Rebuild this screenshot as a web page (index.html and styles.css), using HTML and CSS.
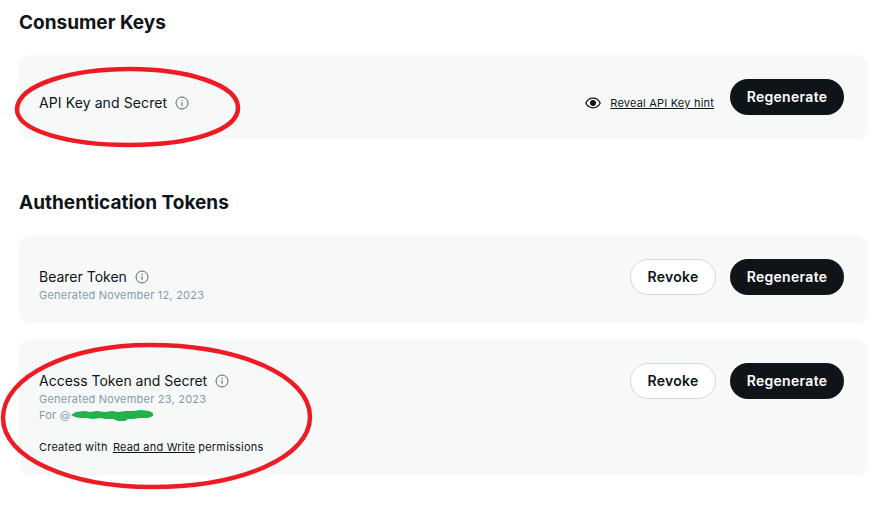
FILE: index.html
```html
<!doctype html>
<html>
<head>
<meta charset="utf-8">
<title>Keys and tokens</title>
<link rel="stylesheet" href="styles.css">
</head>
<body>
<section class="wrap">
	<h2 class="title">Consumer Keys</h2>
	<div class="card card-key">
		<div class="info">
			<div class="name">API Key and Secret
				<svg class="hint" viewBox="0 0 14 14"><circle cx="7" cy="7" r="6" /><path d="M7 6.2v4M7 3.8v1.1" /></svg>
			</div>
		</div>
		<div class="actions">
			<svg class="eye" viewBox="0 0 16 12"><path d="M.8 6C2.4 2.8 5 1.2 8 1.2s5.6 1.6 7.2 4.8c-1.6 3.200-4.200 4.800-7.200 4.800S2.400 9.200.8 6z" fill="none" stroke="#0f1419" stroke-width="1.300" /><circle cx="8" cy="6" r="3" fill="#0f1419" /></svg>
			<a href="#" class="reveal">Reveal API Key hint</a>
			<a href="#" class="btn btn-dark">Regenerate</a>
		</div>
	</div>

	<h2 class="title title-second">Authentication Tokens</h2>
	<div class="card card-token">
		<div class="info">
			<div class="name">Bearer Token
				<svg class="hint" viewBox="0 0 14 14"><circle cx="7" cy="7" r="6" /><path d="M7 6.2v4M7 3.8v1.1" /></svg>
			</div>
			<div class="sub">Generated November 12, 2023</div>
		</div>
		<div class="actions">
			<a href="#" class="btn btn-light">Revoke</a>
			<a href="#" class="btn btn-dark">Regenerate</a>
		</div>
	</div>
	<div class="card card-token">
		<div class="info">
			<div class="name">Access Token and Secret
				<svg class="hint" viewBox="0 0 14 14"><circle cx="7" cy="7" r="6" /><path d="M7 6.2v4M7 3.8v1.1" /></svg>
			</div>
			<div class="sub">Generated November 23, 2023</div>
			<div class="sub">For @<svg class="blot" viewBox="0 0 82 11"><path d="M0 5l5-3 8-1 6 1 7-1 8 1 7-1 6 1 8-1 7 0 8-1 8 1 4 2 0 3-5 2-8 0-7 1-5 0-3 2-7 0-5-2-7 0-6-1-7 1-7-1-6 0-5-1z" /></svg></div>
			<div class="perm">Created with <a href="#">Read and Write</a> permissions</div>
		</div>
		<div class="actions">
			<a href="#" class="btn btn-light">Revoke</a>
			<a href="#" class="btn btn-dark">Regenerate</a>
		</div>
	</div>

	<svg class="marks" viewBox="0 0 892 509">
		<path d="M17 108C20 84 72 69 130 69c58 0 107 16 108 38 1 23-46 38-109 38C70 145 15 131 17 108z" />
		<path d="M3 418C3 376 70 345 150 345c88 0 160 30 160 72 0 40-68 70-158 70C70 487 3 458 3 418z" />
	</svg>
</section>
</body>
</html>
```
FILE: styles.css
```css
body {
	margin: 0;
	background: #fff;
	color: #0f1419;
	font-family: Inter, "Liberation Sans", sans-serif;
}
.wrap {
	position: relative;
	width: 892px;
	height: 509px;
	padding: 11px 24px 0 19px;
	box-sizing: border-box;
	overflow: hidden;
}
.title {
	margin: 0 0 20px;
	font-size: 19px;
	line-height: 24px;
	font-weight: 700;
}
.title-second {
	margin-top: 52px;
}
.card {
	display: flex;
	justify-content: space-between;
	align-items: flex-start;
	background: #f7f9f9;
	border-radius: 12px;
	padding: 24px 24px 20px 20px;
	box-sizing: border-box;
	width: 849px;
}
.card-key {
	height: 84px;
}
.card-token {
	margin-bottom: 16px;
}
.name {
	display: flex;
	align-items: center;
	gap: 8px;
	font-size: 14px;
	line-height: 18px;
	margin-top: 9px;
	margin-bottom: 1px;
}
.card-key .name {
	margin-top: 15px;
	letter-spacing: .1px;
}
.hint {
	width: 14px;
	height: 14px;
	fill: none;
	stroke: #536471;
	stroke-width: 1;
}
.sub {
	font-size: 11px;
	line-height: 16px;
	letter-spacing: .22px;
	color: #8599ab;
	display: flex;
	align-items: center;
}
.blot {
	width: 82px;
	height: 11px;
	fill: #22b14c;
}
.perm {
	font-size: 11px;
	line-height: 16px;
	letter-spacing: .2px;
	margin-top: 16px;
}
.perm a {
	color: #0f1419;
	margin-left: 2px;
}
.actions {
	display: flex;
	align-items: center;
}
.eye {
	width: 16px;
	height: 12px;
	margin-right: 9px;
	margin-top: 12px;
}
.reveal {
	font-size: 11px;
	letter-spacing: .2px;
	color: #0f1419;
	margin-right: 16px;
	margin-top: 12px;
}
.btn {
	display: block;
	height: 36px;
	line-height: 36px;
	border-radius: 18px;
	box-sizing: border-box;
	font-size: 14px;
	font-weight: 600;
	letter-spacing: .3px;
	text-align: center;
	text-decoration: none;
}
.btn-dark {
	width: 114px;
	background: #0f1419;
	color: #fff;
}
.btn-light {
	width: 86px;
	margin-right: 14px;
	line-height: 34px;
	background: #fff;
	color: #0f1419;
	border: 1px solid #cfd9de;
}
.marks {
	position: absolute;
	left: 0;
	top: 0;
	width: 892px;
	height: 509px;
	fill: none;
	stroke: #ed1c24;
	stroke-width: 4.5;
	pointer-events: none;
}
```
